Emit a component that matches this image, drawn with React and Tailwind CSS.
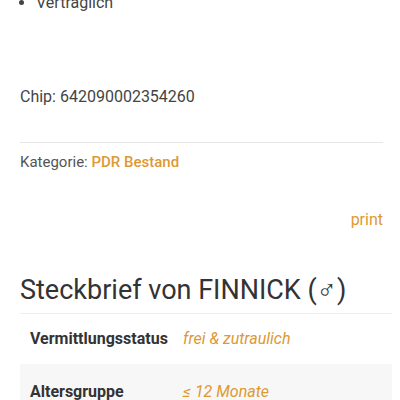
import React from "react";

const ORANGE = "text-[#dd9933]";

const App = () => {
  return (
    <div className="w-[400px] h-[400px] overflow-hidden bg-white font-['Roboto',sans-serif] text-[16px] text-[#444]">
      <div className="pl-5 pr-[17px] -mt-[9px]">
        {/* list end */}
        <ul className="list-disc pl-4 leading-6">
          <li>Verträglich</li>
        </ul>

        {/* chip */}
        <p className="mt-[70px] leading-6">Chip: 642090002354260</p>

        <hr className="mt-[33px] border-0 border-t border-[#e6e6e6]" />

        {/* category */}
        <p className="mt-[7px] leading-6 text-[15px] text-[#555]">
          Kategorie: <a className={`${ORANGE} font-medium`}>PDR Bestand</a>
        </p>

        {/* print */}
        <div className="mt-[34px] flex justify-end leading-6">
          <a className={ORANGE}>print</a>
        </div>

        {/* heading */}
        <h2 className="mt-[42px] text-[27px] leading-[32px] text-[#333]">
          Steckbrief von FINNICK (♂)
        </h2>

        {/* table */}
        <table className="mt-[7px] w-[372px] border-t border-[#eeeeee] text-[16px]">
          <tbody>
            <tr>
              <td className="h-[50px] pl-[10px] w-[163px] font-bold text-[#333]">Vermittlungsstatus</td>
              <td className={`${ORANGE} italic`}>frei &amp; zutraulich</td>
            </tr>
            <tr className="bg-[#f7f7f7]">
              <td className="h-[56px] pl-[10px] font-bold text-[#333]">Altersgruppe</td>
              <td className={`${ORANGE} italic`}>≤ 12 Monate</td>
            </tr>
          </tbody>
        </table>
      </div>
    </div>
  );
};

export default App;
